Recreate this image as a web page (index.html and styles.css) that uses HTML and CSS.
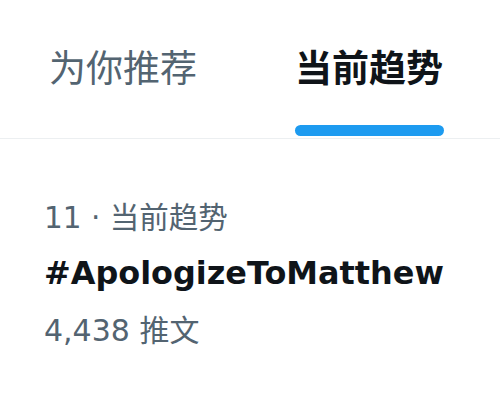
FILE: index.html
```html
<!DOCTYPE html>
<html lang="zh-CN">
<head>
    <meta charset="UTF-8">
    <meta name="viewport" content="width=device-width, initial-scale=1.0">
    <title>当前趋势</title>
    <link rel="stylesheet" href="styles.css">
</head>
<body>
    <div class="tab-container">
        <div class="tab">
            <span class="tab-label">为你推荐</span>
        </div>
        <div class="tab active">
            <span class="tab-label">当前趋势</span>
            <span class="tab-indicator"></span>
        </div>
    </div>
    <div class="trend">
        <div class="trend-meta">11 · 当前趋势</div>
        <div class="trend-name">#ApologizeToMatthew</div>
        <div class="trend-count">4,438 推文</div>
    </div>
</body>
</html>
```

FILE: styles.css
```css
body {
    font-family: "DejaVu Sans", "Noto Sans CJK SC", sans-serif;
    margin: 0;
    padding: 0;
    background-color: #ffffff;
    color: #0f1419;
}
.tab-container {
    display: flex;
    border-bottom: 1px solid #eceff1;
}
.tab {
    flex: 1;
    display: flex;
    flex-direction: column;
    align-items: center;
    padding-top: 48px;
    padding-bottom: 2px;
}
.tab:last-child {
    padding-right: 8px;
}
.tab-label {
    font-size: 37px;
    line-height: 44px;
    color: #536471;
}
.tab.active .tab-label {
    font-weight: bold;
    color: #0f1419;
}
.tab-indicator {
    display: block;
    width: 149px;
    height: 11px;
    margin-top: 33px;
    border-radius: 6px;
    background-color: #1d9bf0;
}
.tab:first-child .tab-label {
    padding-bottom: 44px;
}
.trend {
    padding: 59px 44px 0;
}
.trend-meta {
    font-size: 29.5px;
    line-height: 40px;
    color: #536471;
}
.trend-name {
    margin-top: 13px;
    font-size: 31.9px;
    line-height: 44px;
    font-weight: bold;
}
.trend-count {
    margin-top: 16px;
    font-size: 30px;
    line-height: 40px;
    color: #536471;
}
```
